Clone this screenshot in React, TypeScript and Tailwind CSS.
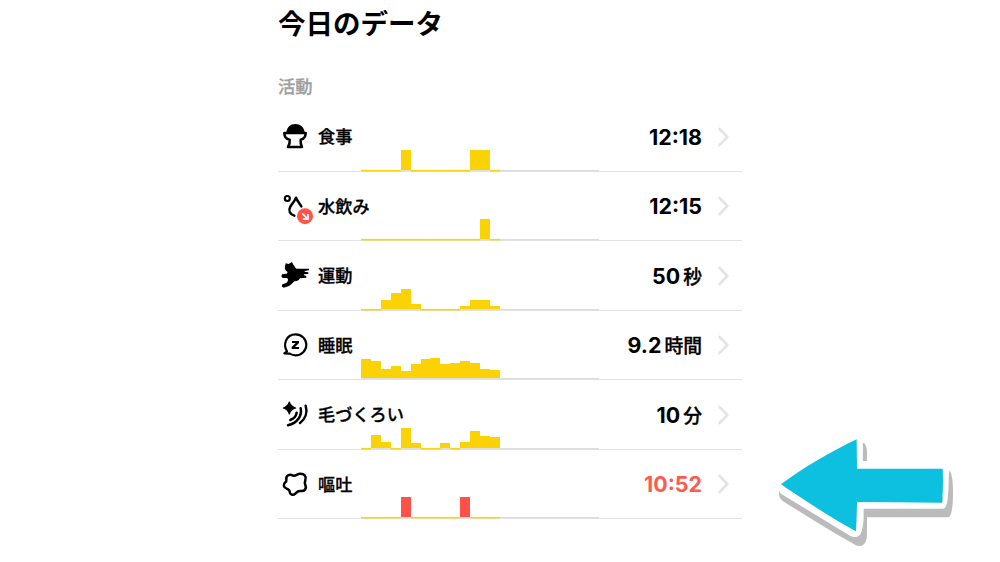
import { ReactNode } from 'react'

type Bar = number

interface IActivityItem {
  key: string
  label: string
  value: string
  unit?: string
  icon: ReactNode
  bars: Bar[]
  isAlert?: boolean
}

const HOURS = 24
const CHART_WIDTH = 238
const CHART_HEIGHT = 24
const BAR_WIDTH = CHART_WIDTH / HOURS

const IconBase = ({ children }: { children: ReactNode }) => (
  <svg
    viewBox="12 5 120 120"
    className="h-10 w-10 shrink-0"
    fill="none"
    stroke="#000"
    strokeWidth="7.5"
    strokeLinecap="round"
    strokeLinejoin="round"
  >
    {children}
  </svg>
)

const MealIcon = () => (
  <IconBase>
    <path d="M37 55C38 38 50 29 64 29S91 38 92 55Z" fill="#000" stroke="none" />
    <path d="M31 56H95C95 66 89 74 80 76C79 84 81 92 84 98H42C46 92 48 84 47 76C37 74 31 66 31 56Z" />
  </IconBase>
)

const WaterIcon = () => (
  <IconBase>
    <circle cx="40" cy="42.500" r="7.500" strokeWidth="6.500" />
    <path d="M61 94C48 90 42 79 49 67C54 58 61 53 66 40C70 50 77 57 82 66" strokeWidth="7.500" />
    <circle cx="93" cy="95.500" r="24" fill="#ff5549" stroke="none" />
    <path
      d="M85 87.500L101 103.500M102 89V104.500H86.500"
      stroke="#fff"
      strokeWidth="5"
      strokeLinecap="butt"
      strokeLinejoin="miter"
    />
  </IconBase>
)

const RunIcon = () => (
  <IconBase>
    <path
      d="M35 30L44 32L54 26L58 34C63 38 62 44 68 46L105 46V51L92 53V55L103 57V62L90 63V66L97 68V73L78 75C75 81 70 83 62 84C55 89 51 96 43 99L29 103L23 99L25 93L37 89C41 86 42 82 42 78L39 74L26 74L22 69L24 63L38 61L41 56C34 52 32 47 33 40Z"
      fill="#000"
      stroke="none"
    />
  </IconBase>
)

const SleepIcon = () => (
  <IconBase>
    <path
      d="M39 84C27 66 34 33 65 33C83 33 97 47 97 64.500C97 82 83 96 65 96C58 96 52 94 47 91L31 90Z"
      strokeWidth="6.500"
    />
    <path d="M54 53H75V59L63 71H75V77H53V71L65 59H54Z" fill="#000" stroke="none" />
  </IconBase>
)

const GroomingIcon = () => (
  <IconBase>
    <path
      d="M46 29C49 39 54 44 65 47C54 50 49 55 46 65C43 55 38 50 28 47C38 44 43 39 46 29Z"
      fill="#000"
      strokeWidth="3.500"
    />
    <path
      d="M68 61C66 73 58 80 49 83M80 48C85 70 70 93 42 99M95 40C101 60 94 80 78 92"
      strokeWidth="7.500"
    />
  </IconBase>
)

const VomitIcon = () => (
  <IconBase>
    <path d="M57 40C65 43 69 34 79 34C91 34 98 43 94 53C92 59 91 62 94 68C99 79 91 88 80 86C72 84 69 89 64 94C57 101 47 96 47 88C47 82 43 81 38 79C28 76 27 65 34 60C39 56 37 53 37 48C37 38 48 35 57 40Z" />
  </IconBase>
)

const ACTIVITIES: IActivityItem[] = [
  {
    key: 'meal',
    label: '食事',
    value: '12:18',
    icon: <MealIcon />,
    bars: [0, 0, 0, 0, 20, 0, 0, 0, 0, 0, 0, 20, 20, 0]
  },
  {
    key: 'water',
    label: '水飲み',
    value: '12:15',
    icon: <WaterIcon />,
    bars: [0, 0, 0, 0, 0, 0, 0, 0, 0, 0, 0, 0, 20, 0]
  },
  {
    key: 'run',
    label: '運動',
    value: '50',
    unit: '秒',
    icon: <RunIcon />,
    bars: [0, 0, 9, 16.5, 20, 5.5, 0, 0, 0, 0, 3, 9, 9, 3]
  },
  {
    key: 'sleep',
    label: '睡眠',
    value: '9.2',
    unit: '時間',
    icon: <SleepIcon />,
    bars: [19, 16.7, 9.3, 11.8, 6.8, 14, 19, 20, 14, 15.5, 16.7, 15.3, 9.5, 8.5]
  },
  {
    key: 'grooming',
    label: '毛づくろい',
    value: '10',
    unit: '分',
    icon: <GroomingIcon />,
    bars: [0, 13.5, 6.3, 0, 20, 5.5, 0, 0, 5.5, 0, 6.3, 16.7, 12.2, 10.7]
  },
  {
    key: 'vomit',
    label: '嘔吐',
    value: '10:52',
    icon: <VomitIcon />,
    bars: [0, 0, 0, 0, 20, 0, 0, 0, 0, 0, 20, 0, 0, 0],
    isAlert: true
  }
]

const HourlyChart = ({ bars, isAlert }: Pick<IActivityItem, 'bars' | 'isAlert'>) => {
  const base = CHART_HEIGHT - 1
  return (
    <svg
      viewBox={`0 0 ${CHART_WIDTH} ${CHART_HEIGHT}`}
      className="h-6 w-[238px] overflow-visible"
    >
      <rect x="0" y={base} width={CHART_WIDTH} height="1.4" fill="#dedede" />
      {bars.map((height, i) =>
        height > 0 ? (
          <rect
            key={i}
            x={i * BAR_WIDTH}
            y={base - height}
            width={BAR_WIDTH}
            height={height}
            fill={isAlert ? '#ff5147' : '#fbd304'}
            shapeRendering="crispEdges"
          />
        ) : (
          <rect
            key={i}
            x={i * BAR_WIDTH}
            y={base - 0.1}
            width={BAR_WIDTH + 0.1}
            height="1.55"
            fill="#fbd410"
          />
        )
      )}
    </svg>
  )
}

const ActivityRow = ({ label, value, unit, icon, bars, isAlert }: IActivityItem) => {
  return (
    <li className="grid h-[69.5px] grid-cols-[83px_238px_1fr] grid-rows-[minmax(0,1fr)] border-b border-[#e3e3e3]">
      <div className="col-span-2 col-start-1 row-start-1 flex items-center">
        {icon}
        <span className="text-[17.2px] font-medium leading-6 [-webkit-text-stroke:0.3px_#000]">
          {label}
        </span>
      </div>
      <div className="col-start-2 row-start-1 flex items-end">
        <HourlyChart bars={bars} isAlert={isAlert} />
      </div>
      <div className="col-start-3 row-start-1 flex items-center justify-end pr-[13px] pt-px">
        <div
          className={
            isAlert
              ? 'flex items-baseline gap-[3px] text-[#ff5a4e]'
              : 'flex items-baseline gap-[3px]'
          }
        >
          <span className="font-['Inter'] text-[21.4px] font-bold leading-6">{value}</span>
          {unit && (
            <span className="text-[18.8px] font-medium leading-6 [-webkit-text-stroke:0.35px_#000]">
              {unit}
            </span>
          )}
        </div>
        <svg
          viewBox="0 0 12 20"
          className="ml-[15px] h-5 w-3"
          fill="none"
          stroke="#e4e4e4"
          strokeWidth="2.6"
        >
          <path
            d="M2.500 1.800L10.300 10L2.500 18.200"
            strokeLinecap="round"
            strokeLinejoin="round"
          />
        </svg>
      </div>
    </li>
  )
}

const PointerArrow = () => (
  <svg viewBox="0 0 600 375" className="absolute left-[770px] top-[430px] h-[125px] w-[200px]">
    <path
      d="M278 38C286 38 291 50 291 66V93H278ZM536 122C544 124 549 145 549 182C549 220 547 262 533 262H291V310C291 345 277 352 258 346C185 306 110 258 37 212C28 205 26 196 27 184L60 160L270 200H530Z"
      fill="#bbb"
    />
    <path
      d="M258 28L261 116H518V217L261 216L258 304C261 320 268 322 274 305C282 285 281 260 281 236H520C535 236 537 180 536 100H278V40Z"
      fill="#fff"
    />
    <path d="M34 166L258 300L276 296C272 320 260 326 240 317L34 192C25 186 26 168 34 163Z" fill="#fff" />
    <path
      d="M33 163C105 110 180 66 260 28L261 116H518C520 150 519 185 516 218C430 217 345 216 261 216L258 304C180 261 107 214 33 163Z"
      fill="#0dc0e0"
    />
  </svg>
)

export default function App() {
  return (
    <main className="relative h-[562px] w-[1000px] overflow-hidden bg-white font-['Noto_Sans_CJK_JP',sans-serif] text-black">
      <section className="ml-[278px] w-[464px]">
        <h1 className="pt-[3px] text-[27.5px] font-bold leading-[38px]">今日のデータ</h1>
        <h2 className="mt-[33px] text-[17.3px] font-medium leading-6 text-[#a0a0a0] [-webkit-text-stroke:0.3px_#a0a0a0]">
          活動
        </h2>
        <ul className="mt-[4.2px]">
          {ACTIVITIES.map(({ key, ...item }) => (
            <ActivityRow key={key} {...item} />
          ))}
        </ul>
      </section>
      <PointerArrow />
    </main>
  )
}
